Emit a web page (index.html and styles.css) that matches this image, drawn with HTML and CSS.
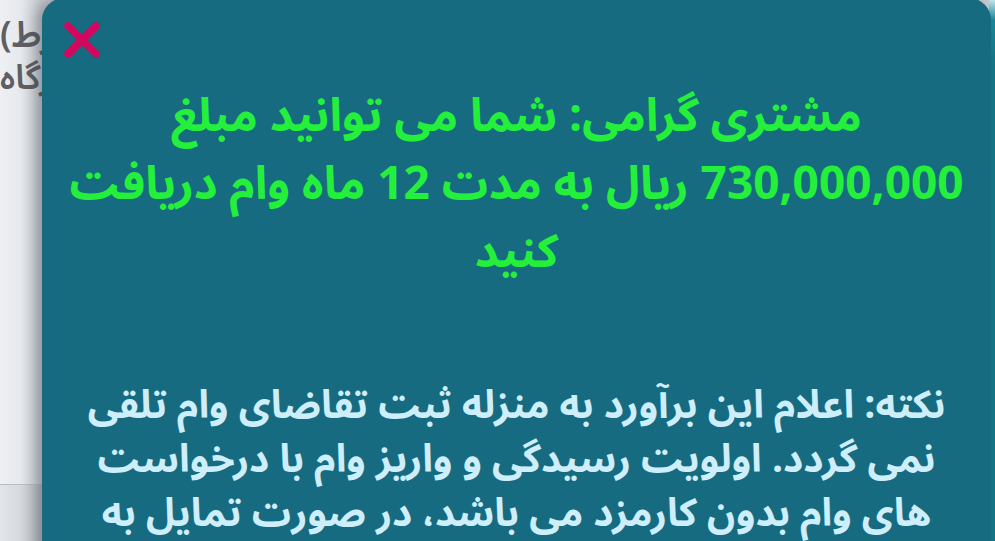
FILE: index.html
```html
<!DOCTYPE html>
<html lang="fa">
<head>
<meta charset="utf-8">
<link rel="stylesheet" href="styles.css">
</head>
<body>
<div class="page">
  <div class="under">
    <div class="under-top">
      <p class="u1" dir="rtl">(شرط)</p>
      <p class="u2" dir="rtl">درگاه</p>
    </div>
    <div class="under-bottom"></div>
  </div>
  <div class="edge"></div>
  <div class="modal" dir="rtl">
    <button class="close" aria-label="بستن">
      <svg width="44" height="44" viewBox="0 0 44 44"><path d="M8 8 L36 36 M36 8 L8 36" stroke="#d4075f" stroke-width="7.5" stroke-linecap="round" fill="none"/></svg>
    </button>
    <h1 class="title">مشتری گرامی: شما می توانید مبلغ<br>730,000,000 ریال به مدت 12 ماه وام دریافت<br>کنید</h1>
    <p class="note">نکته: اعلام این برآورد به منزله ثبت تقاضای وام تلقی<br>نمی گردد. اولویت رسیدگی و واریز وام با درخواست<br>های وام بدون کارمزد می باشد، در صورت تمایل به</p>
  </div>
</div>
</body>
</html>
```

FILE: styles.css
```css
html, body {
  margin: 0;
  padding: 0;
  width: 995px;
  height: 541px;
  overflow: hidden;
}
body {
  font-family: "Noto Sans Arabic", "DejaVu Sans", "Noto Sans", sans-serif;
}
.page {
  position: relative;
  width: 995px;
  height: 541px;
  overflow: hidden;
}
.under {
  display: flex;
  flex-direction: column;
  width: 995px;
  height: 541px;
}
.under-top {
  height: 485px;
  background: linear-gradient(90deg, #eef0f3 0px, #e6e9ed 20px, #c9ccd1 40px);
  box-sizing: border-box;
  border-bottom: 1px solid #b9bcc1;
}
.under-bottom {
  flex: 1;
  background: linear-gradient(90deg, #e2e5e9 0px, #d6d9dd 20px, #b7bbc1 40px);
}
.under-top p {
  margin: 0;
  color: #5d5f63;
  font-weight: 600;
  text-align: left;
  white-space: nowrap;
}
.u1 {
  font-size: 36px;
  padding-top: 12px;
  line-height: 48px;
  margin-left: -4px;
}
.u2 {
  font-size: 34px;
  line-height: 36px;
  margin-left: 5px;
}
.edge {
  position: absolute;
  right: 0;
  top: 0;
  width: 6px;
  height: 541px;
  background: linear-gradient(180deg, #bfe6ee 0px, #1a8a9a 20px, #15778a 60px);
}
.modal {
  position: absolute;
  left: 42px;
  top: -2px;
  width: 949px;
  height: 560px;
  background: #176b80;
  border-radius: 22px 22px 0 0;
  box-shadow: -6px 0 14px rgba(40, 50, 60, 0.35);
  box-sizing: border-box;
  padding: 85px 0 0;
  text-align: center;
}
.close {
  position: absolute;
  left: 18px;
  top: 20px;
  width: 44px;
  height: 44px;
  padding: 0;
  border: 0;
  background: none;
}
.close svg { display: block; }
.title {
  margin: 0;
  color: #24f03c;
  font-size: 46px;
  font-weight: bold;
  line-height: 68px;
  white-space: nowrap;
}
.note {
  margin: 0;
  margin-top: 92px;
  color: #cdeefa;
  font-size: 39px;
  font-weight: bold;
  line-height: 54px;
  white-space: nowrap;
}
```
